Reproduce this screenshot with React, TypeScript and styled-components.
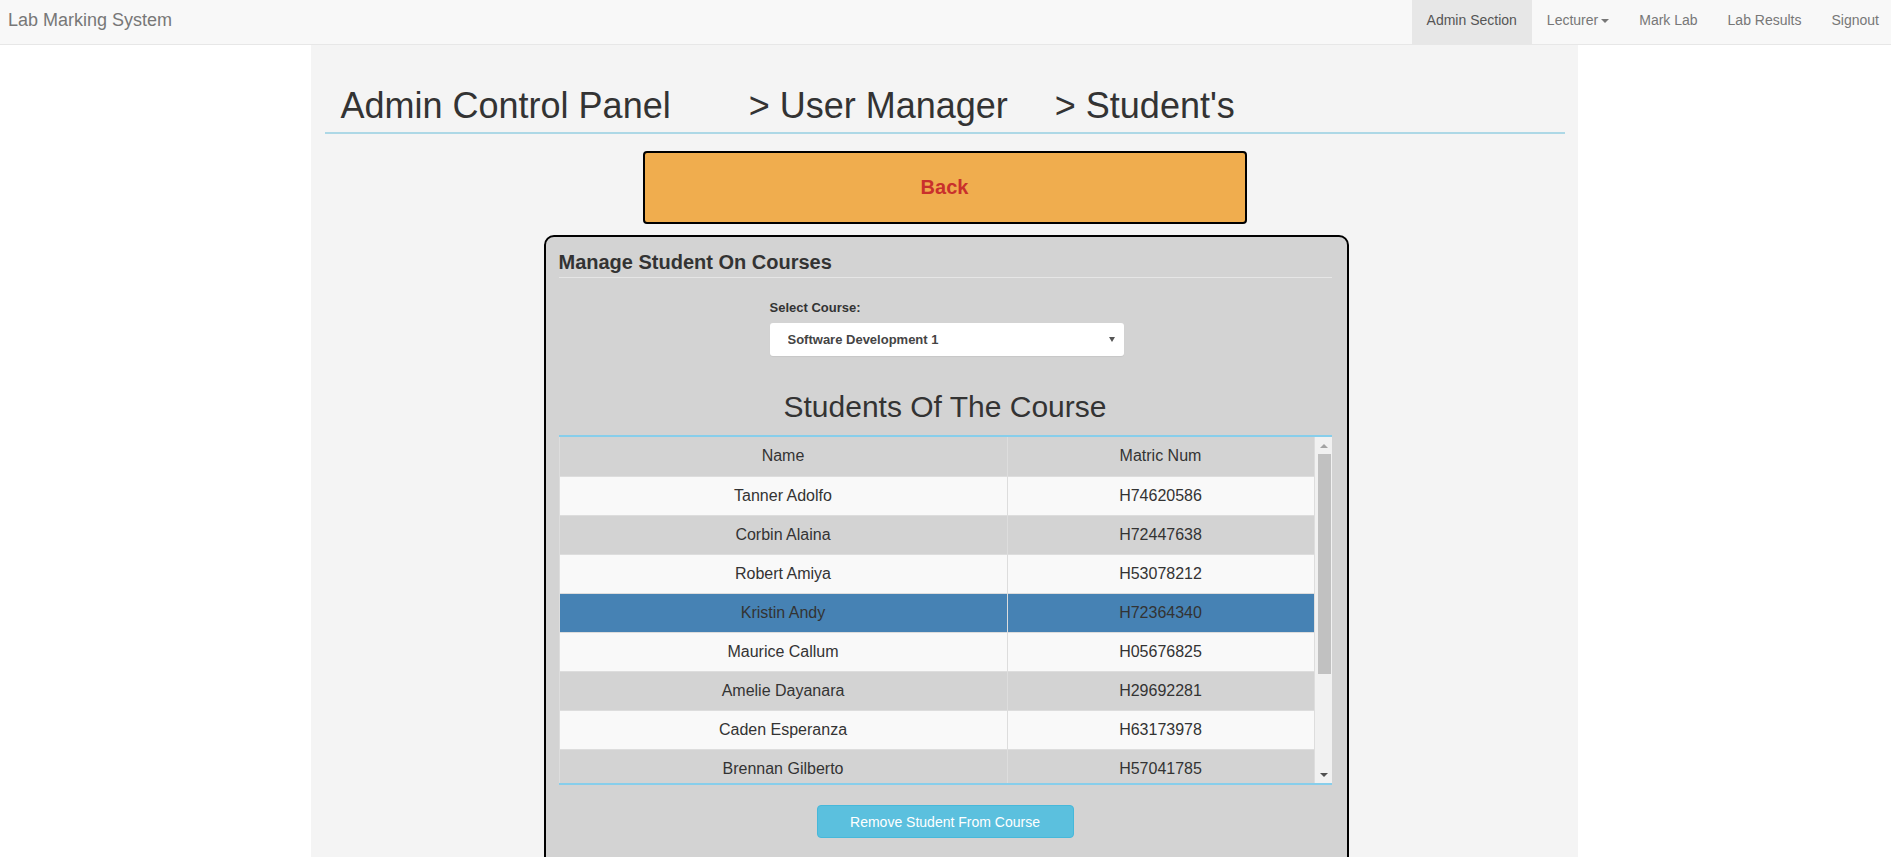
import React from 'react';
import styled, { createGlobalStyle } from 'styled-components';

const GlobalStyle = createGlobalStyle`
  html, body {
    margin: 0;
    padding: 0;
    overflow: hidden;
    background: #fff;
    font-family: "Liberation Sans", Arial, sans-serif;
    color: #333;
  }
  * { box-sizing: border-box; }
`;

const Navbar = styled.nav`
  height: 45px;
  display: flex;
  justify-content: space-between;
  align-items: stretch;
  background: #f8f8f8;
  border-bottom: 1px solid #e7e7e7;
`;

const Brand = styled.div`
  padding: 10px 8px 0;
  font-size: 18px;
  line-height: 20px;
  color: #777;
`;

const NavList = styled.ul`
  display: flex;
  list-style: none;
  margin: 0 -3px 0 0;
  padding: 0;
`;

const NavLink = styled.li<{ $active?: boolean }>`
  padding: 10px 15px 14px;
  font-size: 14px;
  line-height: 20px;
  color: ${(p) => (p.$active ? '#555' : '#777')};
  background: ${(p) => (p.$active ? '#e7e7e7' : 'transparent')};
  display: flex;
  align-items: flex-start;
`;

const Caret = styled.span`
  display: inline-block;
  width: 0;
  height: 0;
  margin: 9px 0 0 3px;
  border-top: 4px solid #777;
  border-left: 4px solid transparent;
  border-right: 4px solid transparent;
`;

const Container = styled.main`
  width: 1267px;
  margin-left: calc(50% - 635px);
  min-height: calc(100vh - 45px);
  background: #f4f4f4;
  padding: 41px 13px 0 14px;
  display: flex;
  flex-direction: column;
  align-items: center;
`;

const PageHeader = styled.h1`
  align-self: stretch;
  display: flex;
  margin: 0;
  padding: 0 0 6px 16px;
  font-size: 36px;
  line-height: 40px;
  font-weight: 500;
  color: #333;
  border-bottom: 2px solid #add8e6;
`;

const Crumb = styled.span<{ $gap?: number }>`
  margin-left: ${(p) => p.$gap ?? 0}px;
`;

const BackButton = styled.button`
  margin-top: 17px;
  width: 604px;
  height: 73px;
  background: #f0ad4e;
  border: 2px solid #000;
  border-radius: 4px;
  font-family: "Liberation Sans", Arial, sans-serif;
  font-size: 20px;
  font-weight: bold;
  color: #c9302c;
  cursor: pointer;
`;

const Panel = styled.section`
  margin: 11px 0 0 3px;
  width: 805px;
  background: #d3d3d3;
  border: 2px solid #000;
  border-radius: 10px;
  padding: 14px 15px 40px 13px;
  display: flex;
  flex-direction: column;
  align-items: center;
`;

const PanelTitle = styled.h4`
  align-self: stretch;
  margin: 0;
  padding: 0 0 4px 0;
  font-size: 20px;
  line-height: 22px;
  font-weight: bold;
  color: #333;
  border-bottom: 1px solid #e6e6e6;
`;

const Field = styled.div`
  margin: 21px 0 0 3px;
  width: 354px;
  display: flex;
  flex-direction: column;
`;

const Label = styled.label`
  font-size: 13px;
  line-height: 18px;
  font-weight: bold;
  color: #333;
  margin-bottom: 6px;
`;

const SelectWrap = styled.div`
  position: relative;
  height: 33px;
`;

const Select = styled.select`
  width: 100%;
  height: 33px;
  appearance: none;
  -webkit-appearance: none;
  background: #fff;
  border: none;
  border-radius: 3px;
  box-shadow: 0 1px 1px rgba(0, 0, 0, 0.06);
  padding: 0 30px 0 18px;
  font-family: "Liberation Sans", Arial, sans-serif;
  font-size: 13px;
  font-weight: bold;
  color: #444;
  outline: none;
`;

const SelectArrow = styled.span`
  position: absolute;
  right: 9px;
  top: 14px;
  width: 0;
  height: 0;
  border-top: 5px solid #555;
  border-left: 3px solid transparent;
  border-right: 3px solid transparent;
  pointer-events: none;
`;

const SectionHeading = styled.h3`
  margin: 34px 0 0;
  font-size: 30px;
  line-height: 33px;
  font-weight: 500;
  color: #333;
`;

const TableFrame = styled.div`
  margin-top: 12px;
  align-self: stretch;
  height: 350px;
  display: flex;
  border-top: 2px solid #87ceeb;
  border-bottom: 2px solid #87ceeb;
`;

const TableViewport = styled.div`
  flex: 1;
  overflow: hidden;
`;

const ScrollTrack = styled.div`
  width: 17px;
  flex-shrink: 0;
  background: #f1f1f1;
  display: flex;
  flex-direction: column;
`;

const ScrollArrow = styled.div<{ $dir: 'up' | 'down' }>`
  height: 17px;
  display: flex;
  align-items: center;
  justify-content: center;
  padding-left: 1px;

  &::before {
    content: '';
    width: 0;
    height: 0;
    border-left: 4px solid transparent;
    border-right: 4px solid transparent;
    ${(p) =>
      p.$dir === 'up'
        ? 'border-bottom: 4px solid #a3a3a3;'
        : 'border-top: 4px solid #505050;'}
  }
`;

const ScrollThumbArea = styled.div`
  flex: 1;
  padding: 0 1px 0 3px;
`;

const ScrollThumb = styled.div`
  height: 220px;
  background: #c1c1c1;
`;

const Table = styled.table`
  width: 100%;
  border-collapse: collapse;
  font-size: 16px;
  color: #333;
`;

const HeadCell = styled.th`
  height: 39px;
  padding: 0 8px;
  font-weight: normal;
  text-align: center;
  border: 1px solid #ddd;
  border-top: none;
  background: #d3d3d3;
`;

const Row = styled.tr<{ $odd: boolean; $selected: boolean }>`
  background: ${(p) => (p.$selected ? '#4682b4' : p.$odd ? '#f9f9f9' : 'transparent')};
`;

const Cell = styled.td`
  height: 39px;
  padding: 0 8px;
  text-align: center;
  border: 1px solid #ddd;
`;

const RemoveButton = styled.button`
  margin-top: 20px;
  width: 257px;
  height: 33px;
  background: #5bc0de;
  border: 1px solid #46b8da;
  border-radius: 4px;
  color: #fff;
  font-family: "Liberation Sans", Arial, sans-serif;
  font-size: 14px;
  cursor: pointer;
`;

const students = [
  { name: 'Tanner Adolfo', matric: 'H74620586' },
  { name: 'Corbin Alaina', matric: 'H72447638' },
  { name: 'Robert Amiya', matric: 'H53078212' },
  { name: 'Kristin Andy', matric: 'H72364340' },
  { name: 'Maurice Callum', matric: 'H05676825' },
  { name: 'Amelie Dayanara', matric: 'H29692281' },
  { name: 'Caden Esperanza', matric: 'H63173978' },
  { name: 'Brennan Gilberto', matric: 'H57041785' },
];

const App: React.FC = () => {
  const [selected, setSelected] = React.useState('H72364340');

  return (
    <>
      <GlobalStyle />
      <Navbar>
        <Brand>Lab Marking System</Brand>
        <NavList>
          <NavLink $active>Admin Section</NavLink>
          <NavLink>
            Lecturer<Caret />
          </NavLink>
          <NavLink>Mark Lab</NavLink>
          <NavLink>Lab Results</NavLink>
          <NavLink>Signout</NavLink>
        </NavList>
      </Navbar>

      <Container>
        <PageHeader>
          <Crumb>Admin Control Panel</Crumb>
          <Crumb $gap={78}>&gt; User Manager</Crumb>
          <Crumb $gap={47}>&gt; Student's</Crumb>
        </PageHeader>

        <BackButton>Back</BackButton>

        <Panel>
          <PanelTitle>Manage Student On Courses</PanelTitle>

          <Field>
            <Label>Select Course:</Label>
            <SelectWrap>
              <Select defaultValue="sd1">
                <option value="sd1">Software Development 1</option>
                <option value="sd2">Software Development 2</option>
              </Select>
              <SelectArrow />
            </SelectWrap>
          </Field>

          <SectionHeading>Students Of The Course</SectionHeading>

          <TableFrame>
            <TableViewport>
              <Table>
                <colgroup>
                  <col style={{ width: 448 }} />
                  <col />
                </colgroup>
                <thead>
                  <tr>
                    <HeadCell>Name</HeadCell>
                    <HeadCell>Matric Num</HeadCell>
                  </tr>
                </thead>
                <tbody>
                  {students.map((s, i) => (
                    <Row
                      key={s.matric}
                      $odd={i % 2 === 0}
                      $selected={selected === s.matric}
                      onClick={() => setSelected(s.matric)}
                    >
                      <Cell>{s.name}</Cell>
                      <Cell>{s.matric}</Cell>
                    </Row>
                  ))}
                </tbody>
              </Table>
            </TableViewport>
            <ScrollTrack>
              <ScrollArrow $dir="up" />
              <ScrollThumbArea>
                <ScrollThumb />
              </ScrollThumbArea>
              <ScrollArrow $dir="down" />
            </ScrollTrack>
          </TableFrame>

          <RemoveButton>Remove Student From Course</RemoveButton>
        </Panel>
      </Container>
    </>
  );
};

export default App;
